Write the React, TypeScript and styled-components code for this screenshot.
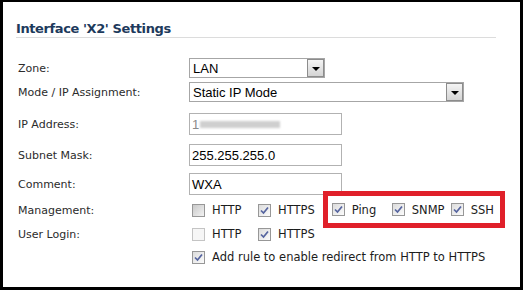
import styled, { createGlobalStyle } from 'styled-components';

const GlobalStyle = createGlobalStyle`
    html, body {
        margin: 0;
        padding: 0;
        background: #000;
    }
    * {
        box-sizing: border-box;
    }
`;

const Frame = styled.div`
    width: 523px;
    height: 290px;
    border-style: solid;
    border-color: #000;
    border-width: 2px 3px 3px 3px;
    background: #fff;
    padding: 18px 24px 0 13px;
    font-family: "DejaVu Sans", Verdana, sans-serif;
    color: #2b2b2b;
`;

const Title = styled.h2`
    margin: 0;
    height: 18px;
    font-size: 13px;
    line-height: 17px;
    font-weight: bold;
    color: #1d3a5c;
    border-bottom: 1px solid #dcdcdc;
    font-family: "DejaVu Sans", Tahoma, sans-serif;
    letter-spacing: -0.4px;
`;

const Row = styled.div<{ $top: number; $h: number }>`
    display: grid;
    grid-template-columns: 171px 1fr;
    align-items: center;
    height: ${p => p.$h}px;
    margin-top: ${p => p.$top}px;
    padding-left: 2px;
`;

const Label = styled.span`
    font-size: 11px;
    white-space: nowrap;
`;

const SelectBox = styled.div<{ $w: number }>`
    width: ${p => p.$w}px;
    height: 20px;
    border: 1px solid #a6a6a6;
    background: #fff;
    display: flex;
    align-items: center;
    justify-content: space-between;
    padding-left: 3px;
    font-family: "Liberation Sans", Arial, sans-serif;
    font-size: 13px;
    color: #000;
`;

const DropButton = styled.span`
    width: 17px;
    height: 18px;
    border: 1px solid #8c8c8c;
    background: linear-gradient(#f4f4f4, #d4d4d4);
    display: flex;
    align-items: center;
    justify-content: center;
`;

const Arrow = styled.span`
    width: 0;
    height: 0;
    border-left: 4px solid transparent;
    border-right: 4px solid transparent;
    border-top: 4px solid #000;
    margin-top: 2px;
`;

const TextBox = styled.div`
    width: 153px;
    height: 22px;
    border: 1px solid #b2b2b2;
    background: #fff;
    display: flex;
    align-items: center;
    padding-left: 2px;
    font-family: "Liberation Sans", Arial, sans-serif;
    font-size: 13px;
    color: #000;
`;

const Faded = styled.span`
    color: #8a8a8a;
`;

const Blur = styled.span`
    width: 80px;
    height: 7px;
    margin-left: 1px;
    background: #cfcfcf;
    filter: blur(1px);
`;

const Options = styled.div`
    display: flex;
    align-items: center;
    padding-left: 3px;
`;

const Option = styled.label<{ $w?: number }>`
    display: flex;
    align-items: center;
    gap: 7px;
    width: ${p => (p.$w ? `${p.$w}px` : 'auto')};
    font-size: 11.5px;
    color: #1c1c1c;
    white-space: nowrap;
`;

const Box = styled.span<{ $tone: 'on' | 'dark' | 'light' }>`
    width: 13px;
    height: 13px;
    flex: none;
    border: 1px solid ${p => (p.$tone === 'light' ? '#c4c4c4' : '#979797')};
    background: ${p =>
        p.$tone === 'dark'
            ? 'linear-gradient(135deg, #c9c9c9, #f2f2f2)'
            : p.$tone === 'light'
            ? '#f6f6f6'
            : 'linear-gradient(135deg, #dcdcdc, #fbfbfb)'};
    display: flex;
    align-items: center;
    justify-content: center;
`;

const Highlight = styled.div`
    display: flex;
    align-items: center;
    height: 37px;
    margin: -9px 0 -8px 8px;
    padding: 0 6px 0 4px;
    border: 5px solid #e0202a;
`;

type Tone = 'on' | 'dark' | 'light';

const Check = ({ tone, text, w }: { tone: Tone; text: string; w?: number }) => (
    <Option $w={w}>
        <Box $tone={tone}>
            {tone === 'on' && (
                <svg width="9" height="9" viewBox="0 0 9 9">
                    <path d="M1 4.5 L3.5 7 L8 1.5" fill="none" stroke="#55649f" strokeWidth="1.7" />
                </svg>
            )}
        </Box>
        {text}
    </Option>
);

const Select = ({ value, w }: { value: string; w: number }) => (
    <SelectBox $w={w}>
        {value}
        <DropButton>
            <Arrow />
        </DropButton>
    </SelectBox>
);

export default function App() {
    return (
        <>
            <GlobalStyle />
            <Frame>
                <Title>Interface 'X2' Settings</Title>

                <Row $top={19} $h={22}>
                    <Label>Zone:</Label>
                    <Select value="LAN" w={136} />
                </Row>
                <Row $top={2} $h={22}>
                    <Label>Mode / IP Assignment:</Label>
                    <Select value="Static IP Mode" w={275} />
                </Row>
                <Row $top={10} $h={22}>
                    <Label>IP Address:</Label>
                    <TextBox><Faded>1</Faded><Blur /></TextBox>
                </Row>
                <Row $top={9} $h={22}>
                    <Label>Subnet Mask:</Label>
                    <TextBox>255.255.255.0</TextBox>
                </Row>
                <Row $top={7} $h={22}>
                    <Label>Comment:</Label>
                    <TextBox>WXA</TextBox>
                </Row>
                <Row $top={5} $h={20}>
                    <Label>Management:</Label>
                    <Options>
                        <Check tone="dark" text="HTTP" w={66} />
                        <Check tone="on" text="HTTPS" />
                        <Highlight>
                            <Check tone="on" text="Ping" w={60} />
                            <Check tone="on" text="SNMP" w={59} />
                            <Check tone="on" text="SSH" />
                        </Highlight>
                    </Options>
                </Row>
                <Row $top={4} $h={20}>
                    <Label>User Login:</Label>
                    <Options>
                        <Check tone="light" text="HTTP" w={66} />
                        <Check tone="on" text="HTTPS" />
                    </Options>
                </Row>
                <Row $top={3} $h={20}>
                    <span />
                    <Options>
                        <Check tone="on" text="Add rule to enable redirect from HTTP to HTTPS" />
                    </Options>
                </Row>
            </Frame>
        </>
    );
}
